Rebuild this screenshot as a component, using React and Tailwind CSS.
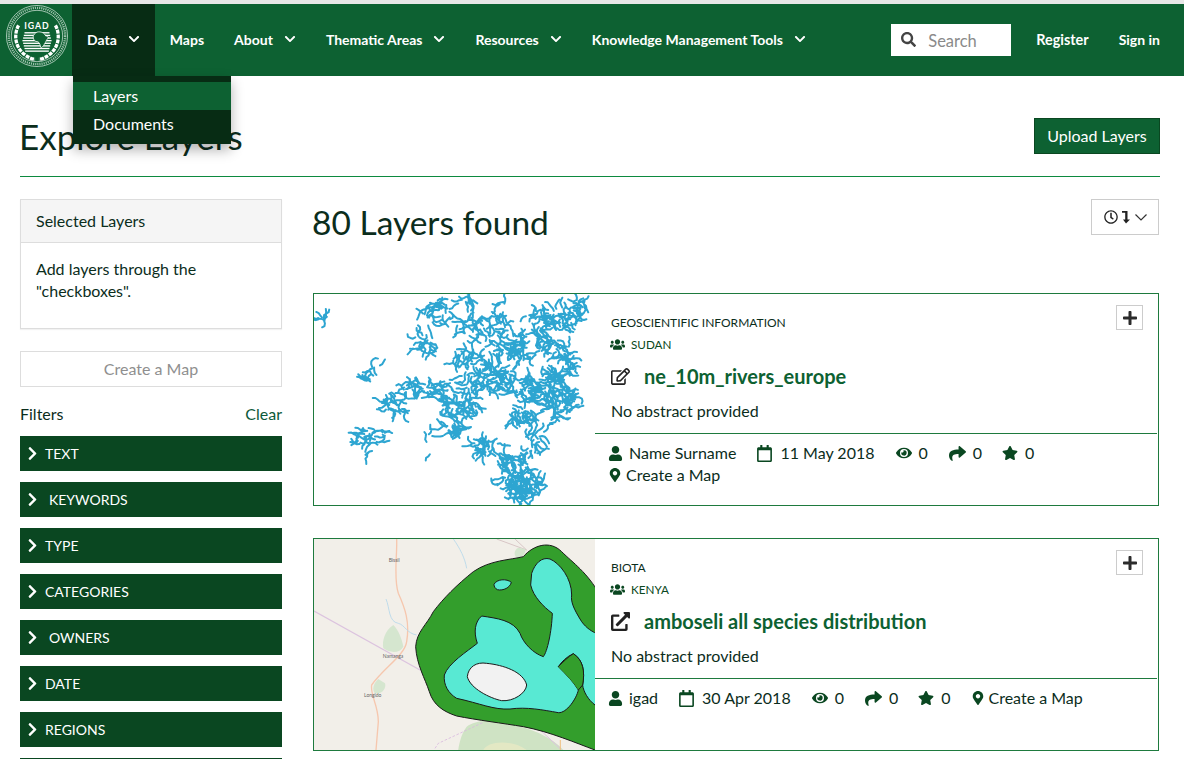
import React from "react";
import {
  FaChevronDown, FaChevronRight, FaSearch, FaUsers, FaRegEdit, FaExternalLinkAlt, FaUser, FaRegCalendar,
  FaEye, FaShare, FaStar, FaMapMarkerAlt, FaPlus, FaRegClock,
} from "react-icons/fa";

function rng(seed) {
  let s = seed;
  return () => {
    s = (s * 1664525 + 1013904223) % 4294967296;
    return s / 4294967296;
  };
}

const blobs = [
  [45, 88, 28, 8, 7], [385, 65, 48, 35, 26], [475, 30, 22, 14, 10], [565, 45, 35, 5, 4], [345, 165, 42, 32, 22],
  [520, 110, 80, 32, 44], [730, 85, 90, 34, 56], [815, 40, 30, 12, 10], [630, 170, 105, 40, 64], [480, 215, 55, 30, 26],
  [745, 215, 50, 60, 44], [560, 270, 115, 42, 80], [700, 300, 75, 50, 64], [755, 340, 40, 50, 40], [440, 340, 70, 45, 54],
  [340, 300, 65, 22, 30], [250, 345, 48, 28, 22], [645, 385, 40, 30, 26], [728, 395, 14, 14, 6], [170, 450, 36, 38, 24],
  [222, 420, 14, 16, 5], [430, 420, 42, 28, 20], [350, 430, 8, 10, 2], [525, 470, 45, 26, 26], [665, 460, 30, 36, 18],
  [610, 530, 45, 40, 40], [645, 590, 50, 40, 70], [560, 590, 6, 12, 2], [148, 255, 10, 14, 4], [195, 240, 18, 26, 5],
  [360, 492, 2, 2, 1],
];
const riverPaths = (() => {
  const r = rng(77);
  const out = [];
  blobs.forEach(([cx, cy, rx, ry, n]) => {
    for (let i = 0; i < n; i++) {
      const t = r() * Math.PI * 2;
      const d = Math.sqrt(r());
      let x = cx + Math.cos(t) * d * rx;
      let y = cy + Math.sin(t) * d * ry;
      let a = r() * Math.PI * 2;
      let p = `M${x.toFixed(1)} ${y.toFixed(1)}`;
      const steps = 3 + Math.floor(r() * 3);
      for (let j = 0; j < steps; j++) {
        a += (r() - 0.5) * 2.0;
        x += Math.cos(a) * 8;
        y += Math.sin(a) * 8;
        p += `L${x.toFixed(1)} ${y.toFixed(1)}`;
      }
      out.push(p);
    }
  });
  return out.join("");
})();

function RiversThumb() {
  return (
    <svg viewBox="12 12 843 633" className="block h-full w-full" aria-hidden="true">
      <rect x="12" y="12" width="843" height="633" fill="#fff" />
      <path d={riverPaths} fill="none" stroke="#1b9dcd" strokeOpacity="0.92" strokeWidth="6" strokeLinecap="round" strokeLinejoin="round" />
    </svg>
  );
}

function MapThumb() {
  return (
    <svg viewBox="12 12 843 633" className="block h-full w-full" aria-hidden="true">
      <rect x="12" y="12" width="843" height="633" fill="#f2efe9" />
      <path d="M12 228L330 405" stroke="#dcc3df" strokeWidth="4" fill="none" />
      <path d="M260 12C262 60 250 130 265 175C285 220 300 260 290 320C285 360 220 400 185 450C180 480 205 510 205 560L198 645" stroke="#f6c7ae" strokeWidth="4" fill="none" />
      <path d="M228 192C240 220 235 260 265 265C285 270 290 295 320 300" stroke="#b5d7ea" strokeWidth="2.5" fill="none" />
      <path d="M430 12C450 40 465 70 470 100" stroke="#b5d7ea" strokeWidth="2.5" fill="none" />
      <path d="M560 12L650 45M615 12L650 45" stroke="#d8c6c6" strokeWidth="3" fill="none" />
      <path d="M250 270C225 285 215 320 220 340C240 355 270 355 280 335C275 310 265 285 250 270Z" fill="#d5e6cf" />
      <path d="M205 432C190 445 185 465 195 475C215 480 230 460 225 445Z" fill="#d5e6cf" />
      <path d="M625 38C610 45 610 65 625 70C640 65 650 50 645 42Z" fill="#d5e6cf" />
      <path d="M470 575C450 600 445 645 445 645H760C720 600 640 570 560 560C520 555 490 560 470 575Z" fill="#cfe3c4" />
      <path d="M520 645C530 620 600 610 650 645Z" fill="#e3e8c4" />
      <path d="M375 640L385 625L520 562" stroke="#d9b8de" strokeWidth="2.5" strokeDasharray="8 5" fill="none" />
      <path d="M680 575L755 645" stroke="#dcc3df" strokeWidth="3" fill="none" />
      <path d="M751 615V645" stroke="#f0c080" strokeWidth="3" fill="none" />
      <text x="236" y="81" fontSize="15" fill="#666" fontFamily="Lato, sans-serif">Bissil</text>
      <text x="218" y="369" fontSize="15" fill="#666" fontFamily="Lato, sans-serif">Namanga</text>
      <text x="162" y="486" fontSize="15" fill="#666" fontFamily="Lato, sans-serif">Longido</text>
      <path d="M640 65C670 30 720 15 755 50C790 85 830 110 870 180V655L855 645C800 625 720 590 640 575C580 565 500 555 440 543C400 530 370 510 358 470C345 430 320 390 317 335C320 290 350 270 370 230C400 190 440 150 490 110C540 75 600 75 640 65Z" fill="#339e2c" stroke="#1a1a1a" strokeWidth="3" />
      <path d="M665 115C675 85 695 65 720 72C750 85 785 130 785 180C782 200 790 220 815 260C830 280 845 290 870 300V525L855 510C835 495 820 470 818 450C825 410 820 375 790 356C770 365 755 380 745 395C770 420 790 440 805 465C800 490 770 535 745 533C700 525 650 515 600 522C550 525 510 505 440 490C415 475 400 450 403 420C415 385 470 350 502 325C490 290 495 260 515 243C560 250 610 255 630 295C640 325 670 355 700 365C712 350 725 290 727 235C700 215 670 185 662 150Z" fill="#58e9d3" stroke="#1a1a1a" strokeWidth="3" />
      <path d="M745 395C760 380 775 365 790 356C820 375 825 410 818 450L805 465C790 440 770 420 745 395Z" fill="#339e2c" />
      <path d="M745 395C760 380 775 365 790 356C820 375 825 410 818 450L805 465" fill="none" stroke="#1a1a1a" strokeWidth="3" />
      <path d="M552 148C560 132 590 130 604 142C600 158 580 168 562 164C555 160 552 155 552 148Z" fill="#58e9d3" stroke="#1a1a1a" strokeWidth="3" />
      <path d="M472 425C475 395 500 380 530 385C580 390 640 410 650 450C648 475 610 500 575 497C540 490 480 460 472 425Z" fill="#f2f2f2" stroke="#1a1a1a" strokeWidth="3" />
    </svg>
  );
}

function Logo() {
  const bars = [0, 1, 2, 3, 4, 5, 6, 7];
  return (
    <svg viewBox="0 0 66 66" className="h-[64px] w-[64px]" aria-label="IGAD logo">
      <circle cx="33" cy="33" r="31.5" fill="none" stroke="#e6f0ea" strokeWidth="0.7" />
      <circle cx="33" cy="33" r="26.5" fill="none" stroke="#e6f0ea" strokeWidth="0.7" />
      <circle cx="33" cy="33" r="29" fill="none" stroke="#cfe2d6" strokeWidth="2.4" strokeDasharray="1.2 1" opacity="0.75" />
      <path d="M14 22C9 31 10 44 20 52C24 55 28 57 31 57" fill="none" stroke="#fff" strokeWidth="3.4" strokeDasharray="4 1" />
      <path d="M52 22C57 31 56 44 46 52C42 55 38 57 35 57" fill="none" stroke="#fff" strokeWidth="3.4" strokeDasharray="4 1" />
      <text x="33" y="26" textAnchor="middle" fontSize="9" fontWeight="700" fill="#fff" fontFamily="Lato, sans-serif" letterSpacing="1">IGAD</text>
      {bars.map((i) => (
        <rect key={i} x={18 + Math.abs(i - 3) * 0.7} y={29 + i * 2.7} width={30 - Math.abs(i - 3) * 1.4} height="1.4" fill="#fff" />
      ))}
      <path d="M33 29C37 28 41 30 42 33C45 33 45 35 43 37C41 41 39 45 37 45C36 42 36 40 34 39C31 39 29 37 29 34C29 32 31 30 33 29Z" fill="#0d6132" stroke="#fff" strokeWidth="0.8" />
    </svg>
  );
}

function NavItem({ label, caret = true, active = false }) {
  return (
    <div className={`flex h-full items-center gap-[11px] px-[15px] pb-[2px] ${active ? "bg-[#072c14]" : ""}`}>
      <span>{label}</span>
      {caret && <FaChevronDown className="text-[12px]" />}
    </div>
  );
}

function Filter({ label, wide }) {
  return (
    <div className="flex h-[35px] items-center bg-[#0a4721] pl-[5px] text-[14px] text-white">
      <FaChevronRight className="text-[15px]" />
      {label && <span className={wide ? "ml-[9px]" : "ml-[5px]"}>{label}</span>}
    </div>
  );
}

function Meta({ icon, children, gap = "gap-[7px]", className = "" }) {
  return (
    <span className={`flex items-center ${gap} ${className}`}>
      {icon}
      <span>{children}</span>
    </span>
  );
}

function Card({ thumb, category, owner, titleIcon, title, children, className = "" }) {
  return (
    <div className={`flex h-[213px] border border-[#1e7a3e] ${className}`}>
      <div className="h-full w-[281px] shrink-0">{thumb}</div>
      <div className="relative flex min-w-0 flex-1 flex-col">
        <div className="absolute top-[11px] right-[15px] flex h-[25px] w-[27px] items-center justify-center border border-[#cccccc] text-[16px] text-[#2b2b2b]">
          <FaPlus />
        </div>
        <div className="h-[139px] pt-[21px] pl-[16px]">
          <div className="h-[16px] text-[12px] leading-[16px] text-[#0b2d1c] uppercase">{category}</div>
          <div className="mt-[5px] flex h-[16px] items-center text-[11.7px] leading-[16px] text-[#0a4721] uppercase">
            <FaUsers className="-ml-px text-[15px]" />
            <span className="ml-[6px]">{owner}</span>
          </div>
          <div className="mt-[9px] flex h-[30px] items-center text-[20px] font-bold text-[#0d6132]">
            <span className="w-[33px] text-[19px] text-[#222]">{titleIcon}</span>
            <span>{title}</span>
          </div>
          <div className="mt-[9px] text-[16px] leading-[22px] text-[#0b2d1c]">No abstract provided</div>
        </div>
        <div className="mr-px border-t border-[#1e7a3e] pt-[8px] pl-[13px] text-[16px] leading-[22px] text-[#0b2d1c]">
          {children}
        </div>
      </div>
    </div>
  );
}

const c = "text-[#0a4721]";

export default function App() {
  return (
    <div className="relative h-[759px] overflow-hidden bg-white font-['Lato',sans-serif] text-[#0b2d1c]">
      <div className="h-1 bg-[#e7e7e7]" />
      <header className="flex h-[72px] items-center bg-[#0d6132] text-[14px] font-bold text-white">
        <div className="flex h-full w-[72px] shrink-0 items-start pl-[5px]"><Logo /></div>
        <NavItem label="Data" active />
        <NavItem label="Maps" caret={false} />
        <NavItem label="About" />
        <NavItem label="Thematic Areas" />
        <NavItem label="Resources" />
        <NavItem label="Knowledge Management Tools" />
        <div className="mb-[1px] ml-auto flex h-[32px] w-[120px] items-center bg-white pl-[10px] text-[16.5px] font-normal text-[#8a8a8a]">
          <FaSearch className="text-[15px] text-[#444]" />
          <span className="mt-[3px] ml-[12px]">Search</span>
        </div>
        <div className="ml-[25px] text-[14.4px]">Register</div>
        <div className="mr-[24px] mb-[2px] ml-[30px]">Sign in</div>
      </header>

      <div className="absolute top-[76px] left-[73px] z-10 w-[158px] bg-[#072c14] py-[6px] text-[16px] text-white shadow-[0_6px_12px_rgba(0,0,0,0.3)]">
        <div className="h-[28px] bg-[#0d6132] pl-[20px] leading-[28px]">Layers</div>
        <div className="h-[28px] pl-[20px] leading-[28px]">Documents</div>
      </div>

      <div className="mr-[24px] ml-[20px]">
        <div className="flex h-[101px] items-start justify-between border-b border-[#0c8a3f] pt-[42px]">
          <h1 className="-mt-px -ml-px text-[35px] leading-[38px] font-normal">Explore Layers</h1>
          <div className="flex h-[36px] w-[126px] items-center justify-center border border-[#0a4721] bg-[#0d6132] text-[16px] text-white">Upload Layers</div>
        </div>

        <div className="mt-[22px] flex">
          <aside className="w-[262px] shrink-0">
            <div className="h-[130px] border border-[#dddddd] shadow-[0_1px_1px_rgba(0,0,0,0.05)]">
              <div className="h-[43px] border-b border-[#dddddd] bg-[#f5f5f5] pl-[15px] text-[16px] leading-[41px]">Selected Layers</div>
              <div className="pt-[15px] pl-[15px] text-[16px] leading-[22px]">Add layers through the<br />"checkboxes".</div>
            </div>
            <div className="mt-[22px] flex h-[36px] items-center justify-center border border-[#dddddd] text-[16px] text-[#8f8f8f]">Create a Map</div>
            <div className="mt-[16px] flex h-[22px] items-center justify-between text-[16px]">
              <span>Filters</span>
              <span className="text-[#0d5a3a]">Clear</span>
            </div>
            <div className="mt-[11px] flex flex-col gap-[11px]">
              <Filter label="TEXT" />
              <Filter label="KEYWORDS" wide />
              <Filter label="TYPE" />
              <Filter label="CATEGORIES" />
              <Filter label="OWNERS" wide />
              <Filter label="DATE" />
              <Filter label="REGIONS" />
              <Filter />
            </div>
          </aside>

          <main className="mr-px ml-[31px] min-w-0 flex-1">
            <div className="flex h-[94px] items-start justify-between">
              <h2 className="mt-[1px] -ml-px text-[33.5px] leading-[44px] font-normal">80 Layers found</h2>
              <div className="flex h-[36px] w-[68px] items-center justify-center border border-[#cccccc] text-[#222]">
                <FaRegClock className="text-[14px]" />
                <svg viewBox="0 0 10 14" className="ml-[3px] h-[14px] w-[10px]" aria-hidden="true">
                  <path d="M1 1H6.5V9.5H9L5 13.5L2 9.5H4.2V2.8H1Z" fill="#222" />
                </svg>
                <svg viewBox="0 0 12 7" className="ml-[4px] h-[7px] w-[12px]" aria-hidden="true">
                  <path d="M0.5 0.5L6 6L11.5 0.5" fill="none" stroke="#333" strokeWidth="1.2" />
                </svg>
              </div>
            </div>

            <Card
              thumb={<RiversThumb />}
              category="Geoscientific Information"
              owner="Sudan"
              titleIcon={<FaRegEdit />}
              title="ne_10m_rivers_europe"
            >
              <div className="flex h-[22px]">
                <Meta gap="gap-[6px]" icon={<FaUser className={`${c} text-[15px]`} />}>Name Surname</Meta>
                <Meta className="ml-[20px]" icon={<FaRegCalendar className={`${c} text-[17px]`} />}>11 May 2018</Meta>
                <Meta className="ml-[21px]" icon={<FaEye className={`${c} text-[16px]`} />}>0</Meta>
                <Meta className="ml-[21px]" icon={<FaShare className={`${c} text-[17px]`} />}>0</Meta>
                <Meta className="ml-[20px]" icon={<FaStar className={`${c} text-[16px]`} />}>0</Meta>
              </div>
              <div className="flex h-[22px]">
                <Meta gap="gap-[4px]" icon={<FaMapMarkerAlt className={`${c} text-[14px]`} />}>Create a Map</Meta>
              </div>
            </Card>

            <Card
              className="mt-[32px]"
              thumb={<MapThumb />}
              category="Biota"
              owner="Kenya"
              titleIcon={<FaExternalLinkAlt />}
              title="amboseli all species distribution"
            >
              <div className="flex h-[22px]">
                <Meta gap="gap-[6px]" icon={<FaUser className={`${c} text-[15px]`} />}>igad</Meta>
                <Meta className="ml-[20px]" icon={<FaRegCalendar className={`${c} text-[17px]`} />}>30 Apr 2018</Meta>
                <Meta className="ml-[21px]" icon={<FaEye className={`${c} text-[16px]`} />}>0</Meta>
                <Meta className="ml-[21px]" icon={<FaShare className={`${c} text-[17px]`} />}>0</Meta>
                <Meta className="ml-[20px]" icon={<FaStar className={`${c} text-[16px]`} />}>0</Meta>
                <Meta className="ml-[20px]" gap="gap-[4px]" icon={<FaMapMarkerAlt className={`${c} text-[14px]`} />}>Create a Map</Meta>
              </div>
            </Card>
          </main>
        </div>
      </div>
    </div>
  );
}
